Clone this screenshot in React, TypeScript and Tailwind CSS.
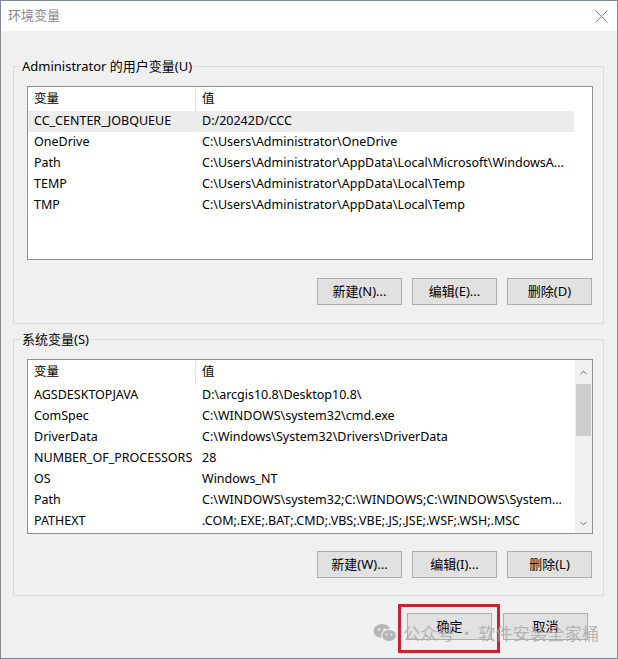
import { ChevronUp, ChevronDown } from 'lucide-react'

const font = { fontFamily: '"Noto Sans", "Noto Sans CJK SC", sans-serif' }

const userVars = [
  ['CC_CENTER_JOBQUEUE', 'D:/20242D/CCC'],
  ['OneDrive', 'C:\\Users\\Administrator\\OneDrive'],
  ['Path', 'C:\\Users\\Administrator\\AppData\\Local\\Microsoft\\WindowsA...'],
  ['TEMP', 'C:\\Users\\Administrator\\AppData\\Local\\Temp'],
  ['TMP', 'C:\\Users\\Administrator\\AppData\\Local\\Temp'],
]

const sysVars = [
  ['AGSDESKTOPJAVA', 'D:\\arcgis10.8\\Desktop10.8\\'],
  ['ComSpec', 'C:\\WINDOWS\\system32\\cmd.exe'],
  ['DriverData', 'C:\\Windows\\System32\\Drivers\\DriverData'],
  ['NUMBER_OF_PROCESSORS', '28'],
  ['OS', 'Windows_NT'],
  ['Path', 'C:\\WINDOWS\\system32;C:\\WINDOWS;C:\\WINDOWS\\System...'],
  ['PATHEXT', '.COM;.EXE;.BAT;.CMD;.VBS;.VBE;.JS;.JSE;.WSF;.WSH;.MSC'],
]

function Btn({ label }: { label: string }) {
  return (
    <button className="w-[85px] h-[27px] bg-[#e1e1e1] border border-[#adadad] text-[13px] text-black">
      {label}
    </button>
  )
}

function VarList({ rows, scroll, selected }: { rows: string[][]; scroll?: boolean; selected?: number }) {
  return (
    <div className="flex h-full min-w-0 border border-[#8e8f8f] bg-white text-[12.5px] text-black">
      <div className="flex-1 min-w-0 flex flex-col overflow-hidden">
        <div className={`flex items-center ${scroll ? 'h-[25px]' : 'h-[24px]'}`}>
          <div className="w-[168px] h-full pl-[6px] flex items-center border-r border-[#e5e5e5]">变量</div>
          <div className="pl-[6px]">值</div>
        </div>
        {rows.map((r, i) => (
          <div
            key={i}
            className={`flex h-[21px] items-center whitespace-nowrap ${i === selected ? 'bg-[#ececec]' : ''}`}
          >
            <div className="w-[168px] shrink-0 pl-[6px] overflow-hidden">{r[0]}</div>
            <div className="pl-[6px]">{r[1]}</div>
          </div>
        ))}
      </div>
      {scroll ? (
        <div className="w-[17px] bg-[#f0f0f0] flex flex-col items-center">
          <div className="h-[24px] flex items-center justify-center text-[#606060]">
            <ChevronUp size={11} strokeWidth={2} />
          </div>
          <div className="w-[15px] h-[52px] bg-[#cdcdcd]" />
          <div className="flex-1" />
          <div className="h-[20px] flex items-center justify-center text-[#606060]">
            <ChevronDown size={11} strokeWidth={2} />
          </div>
        </div>
      ) : (
        <div className="w-[18px]" />
      )}
    </div>
  )
}

function WeChat() {
  return (
    <svg width="24" height="20" viewBox="0 0 24 20">
      <ellipse cx="9" cy="8" rx="8.5" ry="7" fill="#a8a8a8" />
      <ellipse cx="16" cy="12.5" rx="7.5" ry="6.2" fill="#a8a8a8" stroke="#f0f0f0" strokeWidth="1.2" />
      <circle cx="6" cy="6.5" r="1.2" fill="#f0f0f0" />
      <circle cx="11.5" cy="6.5" r="1.2" fill="#f0f0f0" />
      <circle cx="13.5" cy="11.5" r="1" fill="#f0f0f0" />
      <circle cx="18.5" cy="11.5" r="1" fill="#f0f0f0" />
    </svg>
  )
}

export default function App() {
  return (
    <div style={font} className="relative w-[618px] h-[659px] bg-[#f0f0f0] border border-[#7d8a95] overflow-hidden flex flex-col">
      <div className="h-[30px] bg-white flex items-center justify-between pl-[7px] pr-[9px]">
        <span className="text-[13px] text-[#8a8a8a]">环境变量</span>
        <svg width="13" height="13" viewBox="0 0 13 13" stroke="#8a8a8a" strokeWidth="1">
          <line x1="0.5" y1="0.5" x2="12.5" y2="12.5" />
          <line x1="12.5" y1="0.5" x2="0.5" y2="12.5" />
        </svg>
      </div>

      <div className="pl-[12px] pr-[13px] pt-[26px] flex flex-col">
        <fieldset className="min-w-0 border border-[#dcdcdc] pl-[13px] pr-[10px] pb-[18px]">
          <legend className="-ml-[7px] px-[2px] text-[13px] leading-[18px] text-black">Administrator 的用户变量(U)</legend>
          <div className="mt-[11px] h-[174px]">
            <VarList rows={userVars} selected={0} />
          </div>
          <div className="mt-[18px] flex justify-end gap-[10px] pr-[1px]">
            <Btn label="新建(N)..." />
            <Btn label="编辑(E)..." />
            <Btn label="删除(D)" />
          </div>
        </fieldset>

        <fieldset className="mt-[6px] min-w-0 border border-[#dcdcdc] pl-[13px] pr-[10px] pb-[17px]">
          <legend className="-ml-[7px] px-[2px] text-[13px] leading-[18px] text-black">系统变量(S)</legend>
          <div className="mt-[11px] h-[175px]">
            <VarList rows={sysVars} scroll />
          </div>
          <div className="mt-[17px] flex justify-end gap-[10px] pr-[1px]">
            <Btn label="新建(W)..." />
            <Btn label="编辑(I)..." />
            <Btn label="删除(L)" />
          </div>
        </fieldset>

        <div className="mt-[17px] flex justify-end gap-[11px] pr-[16px]">
          <Btn label="确定" />
          <Btn label="取消" />
        </div>
      </div>

      <div className="absolute left-[397px] top-[603px] w-[102px] h-[49px] border-[3px] border-[#c8232f]" />

      <div className="absolute left-[372px] top-[619px] flex items-center gap-[6px] pointer-events-none opacity-80">
        <WeChat />
        <span className="text-[17px] text-[#a9a9a9] tracking-[0.3px] whitespace-nowrap" style={{ fontFamily: '"Noto Sans CJK SC", sans-serif' }}>
          公众号<span className="mx-[3px]">·</span>软件安装全家桶
        </span>
      </div>
    </div>
  )
}
